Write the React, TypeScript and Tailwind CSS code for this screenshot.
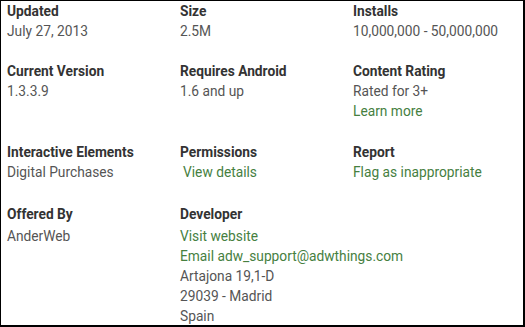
const rows: { label: string; values: { text: string; link?: boolean; indent?: boolean }[] }[][] = [
  [
    { label: "Updated", values: [{ text: "July 27, 2013" }] },
    { label: "Size", values: [{ text: "2.5M" }] },
    { label: "Installs", values: [{ text: "10,000,000 - 50,000,000" }] },
  ],
  [
    { label: "Current Version", values: [{ text: "1.3.3.9" }] },
    { label: "Requires Android", values: [{ text: "1.6 and up" }] },
    {
      label: "Content Rating",
      values: [{ text: "Rated for 3+" }, { text: "Learn more", link: true }],
    },
  ],
  [
    { label: "Interactive Elements", values: [{ text: "Digital Purchases" }] },
    { label: "Permissions", values: [{ text: "View details", link: true, indent: true }] },
    { label: "Report", values: [{ text: "Flag as inappropriate", link: true }] },
  ],
  [
    { label: "Offered By", values: [{ text: "AnderWeb" }] },
    {
      label: "Developer",
      values: [
        { text: "Visit website", link: true },
        { text: "Email adw_support@adwthings.com", link: true },
        { text: "Artajona 19,1-D" },
        { text: "29039 - Madrid" },
        { text: "Spain" },
      ],
    },
  ],
];

const ROW_GAPS = ["mb-[20px]", "mb-[21px]", "mb-[22px]", "mb-0"];

export default function App() {
  return (
    <div className="w-[525px] h-[327px] bg-white border border-black border-r-2 border-b-2 font-['Roboto',sans-serif] text-[13.75px] leading-[20px] overflow-hidden">
      <div className="pl-[6px]">
        {rows.map((row, i) => (
          <div key={i} className={`flex ${ROW_GAPS[i]}`}>
            {row.map((cell) => (
              <div key={cell.label} className="w-[173px] shrink-0 whitespace-nowrap">
                <div className={`font-bold text-[#333] ${i === 3 ? "mb-[2px]" : ""}`}>{cell.label}</div>
                {cell.values.map((v) => (
                  <div
                    key={v.text}
                    className={`${v.link ? "text-[#46803f]" : "text-[#555]"} ${v.indent ? "pl-[3px]" : ""}`}
                  >
                    {v.text}
                  </div>
                ))}
              </div>
            ))}
          </div>
        ))}
      </div>
    </div>
  );
}
